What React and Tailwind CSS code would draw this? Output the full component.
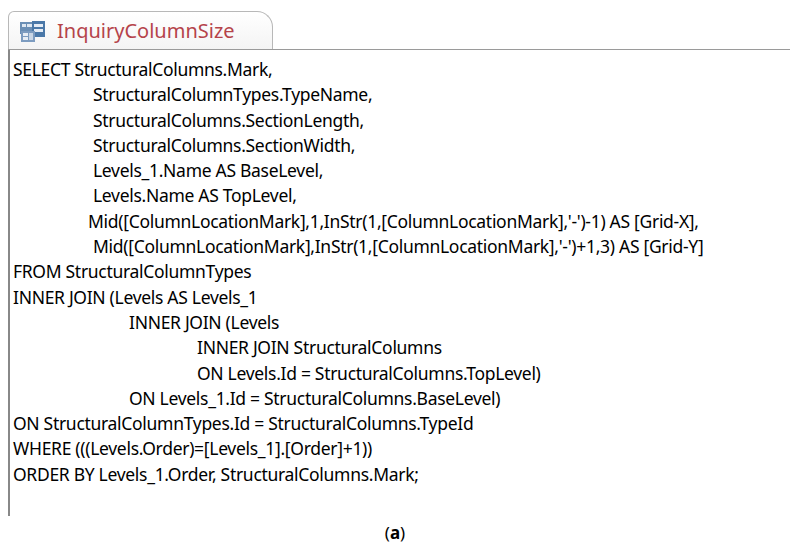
export default function App() {
  const lines = [
    [0, "SELECT StructuralColumns.Mark,"],
    [80, "StructuralColumnTypes.TypeName,"],
    [80, "StructuralColumns.SectionLength,"],
    [80, "StructuralColumns.SectionWidth,"],
    [80, "Levels_1.Name AS BaseLevel,"],
    [80, "Levels.Name AS TopLevel,"],
    [75, "Mid([ColumnLocationMark],1,InStr(1,[ColumnLocationMark],'-')-1) AS [Grid-X],"],
    [80, "Mid([ColumnLocationMark],InStr(1,[ColumnLocationMark],'-')+1,3) AS [Grid-Y]"],
    [0, "FROM StructuralColumnTypes"],
    [0, "INNER JOIN (Levels AS Levels_1"],
    [116, "INNER JOIN (Levels"],
    [184, "INNER JOIN StructuralColumns"],
    [184, "ON Levels.Id = StructuralColumns.TopLevel)"],
    [116, "ON Levels_1.Id = StructuralColumns.BaseLevel)"],
    [0, "ON StructuralColumnTypes.Id = StructuralColumns.TypeId"],
    [0, "WHERE (((Levels.Order)=[Levels_1].[Order]+1))"],
    [0, "ORDER BY Levels_1.Order, StructuralColumns.Mark;"],
  ];
  return (
    <div className="w-[790px] h-[551px] bg-white relative overflow-hidden">
      <div className="pt-[10px] pl-[8px]">
        <div className="flex items-end h-[40px] border-b border-[#9a9a9a]">
          <div className="flex items-center gap-[10px] h-[38px] w-[265px] pl-[10px] border border-b-0 border-[#b8b8b8] rounded-tl-[6px] rounded-tr-[16px] bg-gradient-to-b from-white to-[#f4f4f4]">
            <svg width="28" height="24" viewBox="0 0 28 24">
              <rect x="1" y="3" width="14" height="12" fill="#6b8fb5" />
              <rect x="3" y="5" width="4" height="3" fill="#dfe8f2" />
              <rect x="8" y="5" width="5" height="3" fill="#dfe8f2" />
              <rect x="13" y="2" width="13" height="16" fill="#4a78a8" />
              <rect x="15" y="5" width="9" height="3" fill="#e4ecf5" />
              <rect x="15" y="10" width="9" height="3" fill="#e4ecf5" />
              <rect x="2" y="12" width="14" height="11" fill="#7d9cc0" />
              <rect x="4" y="14" width="5" height="3" fill="#e8eef5" />
              <rect x="4" y="18" width="5" height="3" fill="#e8eef5" />
              <rect x="10" y="14" width="4" height="7" fill="#c9d6e5" />
            </svg>
            <span className="text-[20px] text-[#b5434a] font-[family-name:'Noto_Sans',sans-serif] leading-none">InquiryColumnSize</span>
          </div>
        </div>
        <div className="border-l-2 border-[#888] h-[466px] pl-[3px] pt-[7px] font-[family-name:'Liberation_Serif',serif] text-[17.5px] tracking-[-0.3px] text-black leading-[25.3px]">
          {lines.map(([ind, t], i) => (
            <div key={i} style={{ paddingLeft: ind }} className="whitespace-pre">{t}</div>
          ))}
        </div>
      </div>
      <div className="text-center mt-[4px] text-[17px] font-[family-name:'Open_Sans',sans-serif] text-black">
        (<span className="font-bold">a</span>)
      </div>
    </div>
  );
}
